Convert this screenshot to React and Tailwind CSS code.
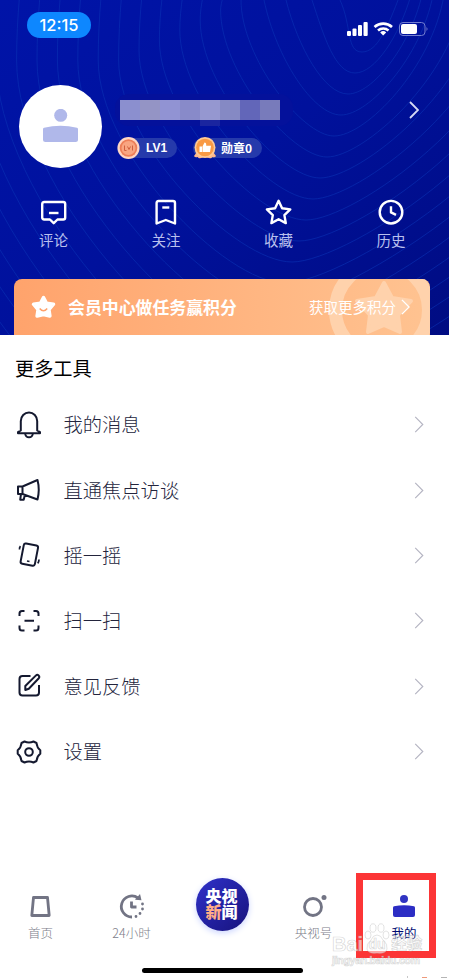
const FONT = "font-['Noto_Sans_CJK_SC','Liberation_Sans',sans-serif]";

// Contour lines spreading out from the top right of the header
const contours = Array.from({ length: 23 }, (_, i) => {
  const left = i < 4 ? [340, 312, 286, 264][i] : 241 - (i - 4) * 20.4;
  const bx = 362 - i * 7;
  const by = 52 + i * 21;
  const right = i < 5 ? 400 + i * 11 : 444 + (i - 4) * 20;
  const top = i < 4 ? 0 : Math.min(60, (i - 4) * 10);
  const dy = by - top;
  const c1 = i < 4 ? `${left + 12} ${dy * 0.5}` : `${left} ${top + dy * 0.42}`;
  const lead = i < 4 ? `M${left - 3} -5L${left} 0` : `M${left + 3} -5Q${left} ${top / 2} ${left} ${top}`;
  return `${lead}C${c1} ${bx - 16 - i * 4} ${by} ${bx} ${by}S${right - 12} ${by * 0.5} ${right} -5`;
});

const actions = [
  {
    label: "评论",
    icon: (
      <>
        <path d="M4.200 3h19q2 0 2 2v13.500q0 2-2 2h-5.700L13.700 24.200l-3.800-3.700H4.200q-2 0-2-2V5q0-2 2-2z" />
        <path d="M9 14h9.500" />
      </>
    ),
  },
  {
    label: "关注",
    icon: (
      <>
        <path d="M6.500 2h14.500q2 0 2 2v20.500L13.800 21 4.600 24.500V4q0-2 1.900-2z" />
        <path d="M10.300 8.500h7" />
      </>
    ),
  },
  {
    label: "收藏",
    icon: <path d="M13.600 1.800l3.500 7.400 8.200 1.200-5.900 5.700 1.400 8-7.200-3.800-7.200 3.800 1.400-8-5.900-5.700 8.200-1.200z" />,
  },
  {
    label: "历史",
    icon: (
      <>
        <circle cx="14" cy="13.200" r="11.300" />
        <path d="M14 7.200v6.200l5 2.500" />
      </>
    ),
  },
];

const tools = [
  {
    label: "我的消息",
    icon: (
      <>
        <path d="M5.800 19.500V10a8.200 8.500 0 0116.400 0v9.500l2.800 1.700v1H3v-1z" />
        <path d="M10.200 22.500a3.800 3.800 0 007.600 0" />
      </>
    ),
  },
  {
    label: "直通焦点访谈",
    icon: <path d="M3 10.500h4.500v7.500H3zM7.500 10.500L22.500 4q2.500 9.500 0 19.500L7.500 18M6 18.200l-.8 5.500h3.500l1.200-5" />,
  },
  {
    label: "摇一摇",
    icon: (
      <>
        <rect x="7" y="3.300" width="14.500" height="20.500" rx="2" transform="rotate(11 14 14)" />
        <path d="M12 20l2.500.5M5.500 5.200Q4.300 6.500 4.500 8.500M24 18.500q0 2.500-1.300 3.800" strokeWidth="1.700" />
      </>
    ),
  },
  {
    label: "扫一扫",
    icon: (
      <path d="M9.500 4H7Q4.500 4 4.500 6.500V9M18.500 4H21q2.500 0 2.500 2.500V9M9.500 23.500H7q-2.500 0-2.500-2.500v-2.500M18.500 23.500H21q2.500 0 2.500-2.500v-2.500M9.500 13.700h9.500" />
    ),
  },
  {
    label: "意见反馈",
    icon: (
      <>
        <path d="M15.500 4H7.500q-3 0-3 3v13.500q0 3 3 3H21q3 0 3-3V13" />
        <path d="M10.300 18v-4L21 3.400q1.300-1.200 2.600 0t.2 2.800L13.800 16.700z" />
      </>
    ),
  },
  {
    label: "设置",
    icon: (
      <>
        <path d="M9.500 3.500Q14 5.500 18.500 3.500L21.500 5Q22 9.800 25.300 12.200V15.800Q22 18.200 21.500 23L18.500 24.500Q14 22.500 9.500 24.500L6.500 23Q6 18.200 2.700 15.800V12.200Q6 9.800 6.500 5z" />
        <circle cx="14" cy="14" r="3.800" />
      </>
    ),
  },
];

function Chevron({ className }) {
  return (
    <svg className={className} viewBox="0 0 10 18" fill="none" stroke="currentColor">
      <path d="M1 1l8 8-8 8" />
    </svg>
  );
}

function StatusBar() {
  return (
    <div className="flex h-[50px] items-start justify-between pt-3 pr-[20px] pl-[27px]">
      <div className="flex h-[26px] w-16 items-center justify-center rounded-full bg-[#0d87ff] font-['Inter',sans-serif] text-[16.500px] font-medium text-white">
        12:15
      </div>
      <svg className="mt-2 h-[18px] w-[82px]" viewBox="0 0 82 18" fill="#fff">
        <rect x="0" y="11" width="4" height="5" rx="1" />
        <rect x="5.500" y="8.500" width="4" height="7.500" rx="1" />
        <rect x="11" y="5" width="4" height="11" rx="1" />
        <rect x="16.500" y="2" width="4.200" height="14" rx="1" />
        <path d="M27.500 7a13 13 0 0117.500 0M31 10.500a8 8 0 0110.500 0" fill="none" stroke="#fff" strokeWidth="2.600" />
        <path d="M36.200 15.500l-3-3a4.300 4.300 0 016 0z" />
        <rect x="52.500" y="2.500" width="25.500" height="13" rx="3.500" fill="none" stroke="#727dd0" />
        <rect x="54" y="4" width="16" height="10" rx="2" />
        <path d="M79.500 7q2 2 0 4z" fill="#727dd0" />
      </svg>
    </div>
  );
}

function Profile() {
  return (
    <div className="mt-[35px] flex h-[83px] pl-[19px]">
      <div className="flex size-[83px] items-center justify-center rounded-full bg-white">
        <svg className="size-9" viewBox="0 0 36 36" fill="#b0b8ea">
          <circle cx="17.700" cy="6.300" r="6.500" />
          <path d="M0 20q0-1 1-1.300 16.500-4 33 0 1 .3 1 1.300v10.500Q35 33 32.500 33h-30Q0 33 0 30.500z" />
        </svg>
      </div>
      <div className="ml-[18px] flex-1">
        <div className="mt-[15px] flex h-5">
          <div className="w-5 bg-[#8b8fcf]" />
          <div className="w-5 bg-[#9494c5]" />
          <div className="w-5 bg-[#9193d3]" />
          <div className="w-5 bg-[#888ac9]" />
          <div className="w-5 bg-[#9597d0]" />
          <div className="w-5 bg-[#8589c4]" />
          <div className="w-5 bg-[#6266b9]" />
          <div className="w-5 bg-[#787bbb]" />
        </div>
        <div className="mt-[18px] flex gap-[16px] text-xs leading-5 font-bold text-white">
          <div className="-ml-[3px] flex h-5 w-[60px] items-center rounded-full bg-[#253aab]">
            <svg className="mr-[5px] size-6 shrink-0" viewBox="0 0 24 24">
              <circle cx="11.500" cy="12" r="11" fill="#ffd6c4" />
              <circle cx="11.500" cy="12" r="8.800" fill="#ee7f58" />
              <circle cx="11.500" cy="12" r="7" fill="#f9a581" />
              <path d="M7.500 9.500v5h2M10.500 10.500l1.500 3 1.500-3M15.500 9.500v5" stroke="#d0603f" fill="none" />
            </svg>
            <span className="font-['Liberation_Sans',sans-serif]">LV1</span>
          </div>
          <div className="flex h-5 w-[69px] items-center rounded-full bg-[#253aab]">
            <svg className="mr-1 size-6 shrink-0" viewBox="0 0 24 24">
              <path d="M4 16l-3 4q1 2 4 1 0 2 3 1l4-1 4 1q3 1 3-1 3 1 4-1l-3-4z" fill="#ffb98c" />
              <circle cx="12" cy="11.500" r="10.500" fill="#ffc996" />
              <circle cx="12" cy="11.500" r="8.800" fill="#f99a44" />
              <path d="M6.500 10.500H9V16H6.500zM9.500 10.500l2-4q2 0 1.700 3.200h4.800L17 16H9.500z" fill="#fff" />
            </svg>
            <span className="text-xs whitespace-nowrap">勋章0</span>
          </div>
        </div>
      </div>
      <Chevron className="mt-4 mr-[30px] h-[18px] w-[10px] text-[#d6daf4] [stroke-width:1.8]" />
    </div>
  );
}

function MemberBanner() {
  return (
    <div className="relative mt-[29px] mr-[19px] ml-[14px] flex h-[56px] items-center overflow-hidden rounded-t-lg bg-gradient-to-r from-[#ffa36c] to-[#ffc391] text-white">
      <svg className="absolute -top-[22px] -right-[5px] size-[106px]" viewBox="0 0 106 106" fill="none">
        <circle cx="53" cy="53" r="46.500" stroke="#ffd2ac" strokeWidth="13" />
        <path
          d="M55 26l8 15 19 3-13 14 2 17-16-7-16 7 2-17-13-14 19-3z"
          fill="#ffd2ac"
          stroke="#ffd2ac"
          strokeWidth="4"
          strokeLinejoin="round"
        />
      </svg>
      <svg className="ml-[17px] size-[26px]" viewBox="0 0 26 26">
        <path
          d="M12.500 3.500l3 5.700 7 1-4.600 5.300 1 6.500-6.400-1.500-6.400 1.500 1-6.500-4.600-5.300 7-1z"
          fill="#fff"
          stroke="#fff"
          strokeWidth="3.500"
          strokeLinejoin="round"
        />
        <path d="M8.700 14.500q3.800 4.500 7.500 0" stroke="#ffa16b" strokeWidth="1.500" fill="none" />
      </svg>
      <span className="ml-[11px] text-[16.900px] font-bold">会员中心做任务赢积分</span>
      <div className="relative ml-auto flex items-center pr-[20px]">
        <span className="text-[14.500px]">获取更多积分</span>
        <Chevron className="ml-[5px] h-[16px] w-[9px] [stroke-width:1.5]" />
      </div>
    </div>
  );
}

function Header() {
  return (
    <header className="relative h-[335px] overflow-hidden bg-gradient-to-br from-[#0014a8] via-[#00119c] to-[#000c82]">
      <svg className="absolute inset-0 h-[335px] w-[449px]" viewBox="0 0 449 335" fill="none">
        <g stroke="#0a32b4" strokeOpacity=".6">
          {contours.map((d) => (
            <path key={d} d={d} />
          ))}
        </g>
        <rect x="115" y="94" width="178" height="32" rx="14" fill="#04119b" />
        <path d="M200 120h20v6h-20z" fill="#1a259f" />
      </svg>
      <div className="relative">
        <StatusBar />
        <Profile />
        <div className="mt-[31px] flex h-[51px] justify-between pr-[38px] pl-[33.500px]">
          {actions.map(({ label, icon }) => (
            <div key={label} className="flex w-10 flex-col items-center">
              <svg className="size-7 shrink-0" viewBox="0 0 28 28" fill="none" stroke="#fff" strokeWidth="2.400" strokeLinejoin="round">
                {icon}
              </svg>
              <span className="mt-[3px] text-[14.500px] leading-5 text-[#b9c0ee]">{label}</span>
            </div>
          ))}
        </div>
        <MemberBanner />
      </div>
    </header>
  );
}

function TabItem({ label, active, children }) {
  return (
    <div className="flex w-[91px] flex-col items-center pt-[19px]">
      <svg className="size-7" viewBox="0 0 28 28" fill="none" stroke="#727484" strokeWidth="2.800" strokeLinejoin="round">
        {children}
      </svg>
      <span className={`mt-1 text-[12.500px] leading-4 ${active ? "text-[#000b72]" : "font-light text-[#7d7d89]"}`}>{label}</span>
    </div>
  );
}

function TabBar() {
  return (
    <nav className="flex h-[91px]">
      <div className="-ml-[5px] flex">
        <TabItem label="首页">
          <path d="M6.500 4.500h14l1.700 18H4.800z" />
        </TabItem>
        <TabItem label="24小时">
          <path d="M14 24A10.500 10.500 0 1120 5" />
          <path d="M13.500 8.500V14h5" />
          <path d="M17 6.800l6.500.5L22 1z" fill="#727484" stroke="none" />
          <path d="M24.500 11v.1M24.500 16v.1M22 20.500v.1M18 23.500v.1" strokeLinecap="round" />
        </TabItem>
      </div>
      <div className="flex w-[91px] justify-center pt-1">
        <div className="flex size-[53px] flex-col items-center justify-center rounded-full bg-gradient-to-br from-[#3032ca] to-[#17127d] pr-px pb-[3px] text-[16px] leading-[16px] font-black text-white shadow-[0_2px_6px_#cbd5ff]">
          <span>央视</span>
          <span>
            <span className="text-[#ffac87]">新</span>闻
          </span>
        </div>
      </div>
      <div className="pl-px">
        <TabItem label="央视号">
          <circle cx="13" cy="14" r="8.500" />
          <circle cx="24" cy="4.500" r="2.500" fill="#727484" stroke="none" />
        </TabItem>
      </div>
      <TabItem label="我的" active>
        <circle cx="14" cy="6" r="4" fill="#3034c2" stroke="none" />
        <path d="M3 14.500q0-1 1-1.300 10-2 20 0 1 .3 1 1.300V22q0 2-2 2H5q-2 0-2-2z" fill="#2c2dc4" stroke="none" />
      </TabItem>
    </nav>
  );
}

// Site mark stamped over the bottom right corner
function Watermark() {
  return (
    <div className="absolute top-[923px] left-[332px] w-[92px] font-['Liberation_Sans','Noto_Sans_CJK_SC',sans-serif] font-bold text-white/60 [-webkit-text-stroke:0.7px_#b0b0b080]">
      <div className="flex h-[31px] items-end text-[20px] leading-5">
        <span>Bai</span>
        <span className="relative flex w-[28px] justify-center">
          <svg className="absolute -top-[11px] left-px h-[34px] w-[26px]" viewBox="0 0 26 34" fill="#ffffff90" stroke="#c4c4c499" strokeWidth=".8">
            <ellipse cx="4" cy="12" rx="3" ry="4" />
            <ellipse cx="9" cy="5" rx="3" ry="4.200" />
            <ellipse cx="17" cy="5" rx="3" ry="4.200" />
            <ellipse cx="22" cy="12" rx="3" ry="4" />
            <path d="M13 12q4 0 6 5 5 4 4 9-1 5-10 4-9 1-10-4-1-5 4-9 2-5 6-5z" />
          </svg>
          <span className="relative text-[14px]">du</span>
        </span>
        <span className="text-[15.500px] whitespace-nowrap">经验</span>
      </div>
      <div className="text-[10.500px] leading-3 tracking-tight">jingyan.baidu.com</div>
    </div>
  );
}

export default function App() {
  return (
    <div className={`relative flex h-[978px] w-[449px] flex-col overflow-hidden bg-white ${FONT}`}>
      <Header />
      <main className="flex-1">
        <h2 className="mt-[19px] pl-[15px] text-[19.200px] leading-7 font-normal text-black">更多工具</h2>
        <ul className="mt-[10px]">
          {tools.map(({ label, icon }) => (
            <li key={label} className="flex h-[65.400px] items-center pr-[25px] pl-[15px]">
              <svg className="size-7" viewBox="0 0 28 28" fill="none" stroke="#14192f" strokeWidth="2" strokeLinejoin="round">
                {icon}
              </svg>
              <span className="ml-[20.500px] text-[19.300px] font-light text-[#23243c]">{label}</span>
              <Chevron className="ml-auto h-[17px] w-[10px] text-[#b4b4c2] [stroke-width:1.2]" />
            </li>
          ))}
        </ul>
      </main>
      <TabBar />
      <div className="mt-[3px] mb-[5px] ml-[142px] h-[5px] w-[161px] shrink-0 rounded-full bg-black" />
      <div className="absolute top-[873px] left-[356px] h-[85px] w-[80px] border-[7px] border-[#fc3536]" />
      <Watermark />
      <div className="absolute bottom-0 left-[407px] flex h-[2px] items-end gap-[14px]">
        <span className="h-[2px] w-px bg-[#c8c8c8]" />
        <span className="h-px w-[5px] bg-[#ee9a7c]" />
        <span className="h-px w-[6px] bg-[#b5b5b5]" />
      </div>
    </div>
  );
}
